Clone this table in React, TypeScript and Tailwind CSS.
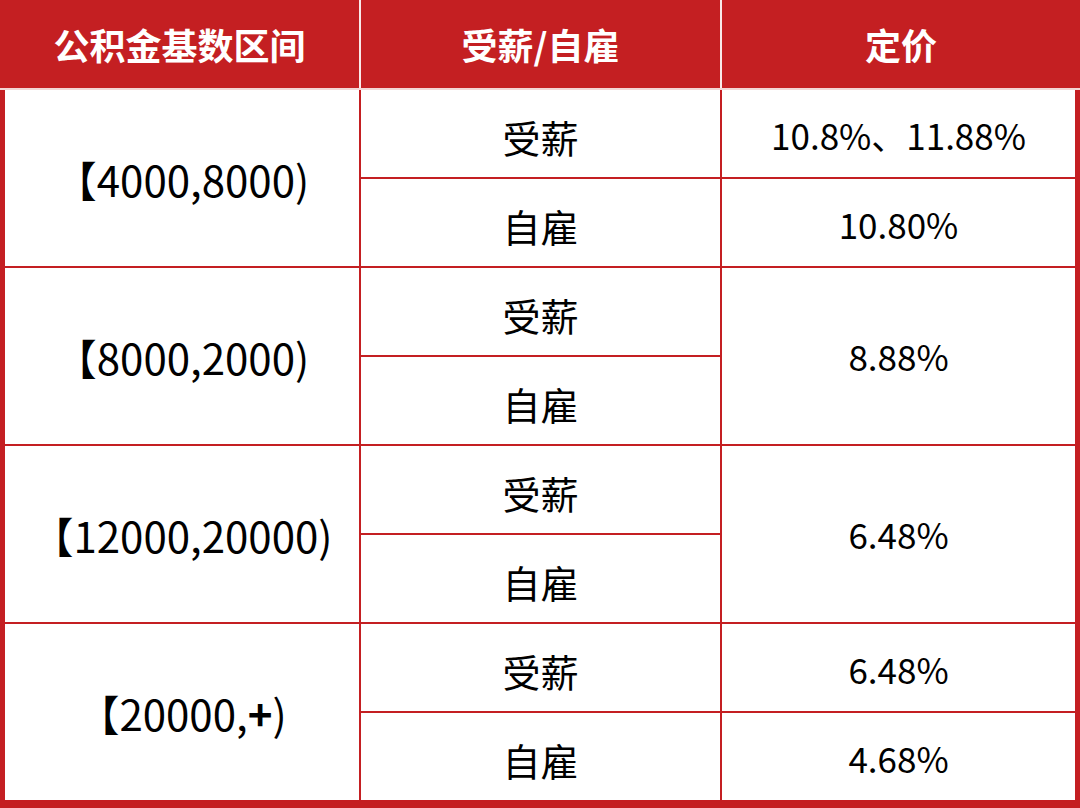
import React from "react";

type Group = {
  range: React.ReactNode;
  prices: string[]; // 1 = merged cell, 2 = one per row
};

const groups: Group[] = [
  { range: "【4000,8000)", prices: ["10.8%、11.88%", "10.80%"] },
  { range: "【8000,2000)", prices: ["8.88%"] },
  { range: "【12000,20000)", prices: ["6.48%"] },
  {
    range: (
      <>
        【20000,<span className="font-bold">+</span>)
      </>
    ),
    prices: ["6.48%", "4.68%"],
  },
];

const font = { fontFamily: '"Noto Sans CJK SC", "Noto Sans", sans-serif' };

export default function App() {
  return (
    <div className="w-[1080px] h-[808px] bg-[#c41f22] flex flex-col" style={font}>
      {/* 表头 */}
      <div className="h-[88px] grid grid-cols-[359px_2px_359px_2px_358px]">
        <div className="flex items-center justify-center text-white text-[36px] font-bold">公积金基数区间</div>
        <div className="bg-white/90" />
        <div className="flex items-center justify-center text-white text-[36px] font-bold">受薪/自雇</div>
        <div className="bg-white/90" />
        <div className="flex items-center justify-center text-white text-[36px] font-bold">定价</div>
      </div>
      <div className="h-[2px] bg-[#f3d6d6]" />

      {/* 表体 */}
      <div className="px-[5px] pb-[8px] flex-1">
        <div className="h-full grid grid-cols-[354px_359px_353px] grid-rows-[repeat(8,87px)] gap-[2px] text-black">
          {groups.map((g, i) => {
            const r = i * 2 + 1;
            return (
              <React.Fragment key={i}>
                <div
                  className="bg-white flex items-center justify-center text-[42px]"
                  style={{ gridRow: `${r} / span 2`, gridColumn: 1 }}
                >
                  {g.range}
                </div>
                <div className="bg-white flex items-center justify-center text-[38px] pt-[6px]" style={{ gridRow: r, gridColumn: 2 }}>受薪</div>
                <div className="bg-white flex items-center justify-center text-[38px] pt-[6px]" style={{ gridRow: r + 1, gridColumn: 2 }}>自雇</div>
                {g.prices.length === 1 ? (
                  <div
                    className="bg-white flex items-center justify-center text-[35px]"
                    style={{ gridRow: `${r} / span 2`, gridColumn: 3 }}
                  >
                    {g.prices[0]}
                  </div>
                ) : (
                  g.prices.map((p, j) => (
                    <div
                      key={j}
                      className="bg-white flex items-center justify-center text-[35px] pt-[4px]"
                      style={{ gridRow: r + j, gridColumn: 3 }}
                    >
                      {p}
                    </div>
                  ))
                )}
              </React.Fragment>
            );
          })}
        </div>
      </div>
    </div>
  );
}
